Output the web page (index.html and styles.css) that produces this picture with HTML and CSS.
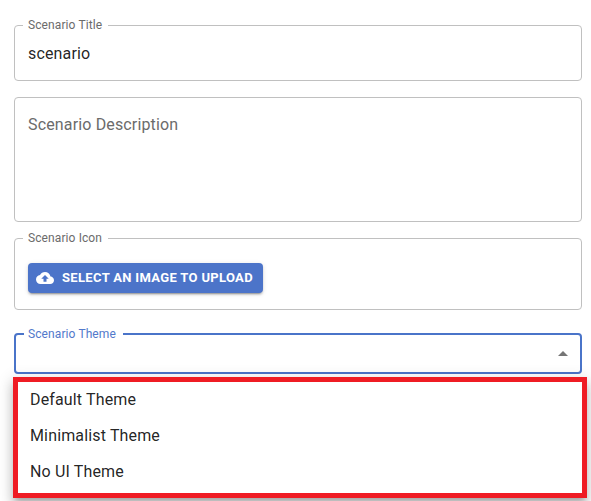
FILE: index.html
```html
<!DOCTYPE html>
<html lang="en">
<head>
<meta charset="utf-8">
<title>Scenario</title>
<link rel="stylesheet" href="styles.css">
</head>
<body>
<form class="form">
  <div class="field field-title">
    <label class="label">Scenario Title</label>
    <div class="value">scenario</div>
  </div>
  <div class="field field-description">
    <div class="placeholder">Scenario Description</div>
  </div>
  <div class="field field-icon">
    <label class="label">Scenario Icon</label>
    <button class="upload" type="button">
      <svg class="cloud" viewBox="0 0 24 24"><path fill="currentColor" d="M19.35 10.04C18.67 6.59 15.64 4 12 4 9.11 4 6.6 5.64 5.35 8.04 2.34 8.36 0 10.91 0 14c0 3.31 2.69 6 6 6h13c2.76 0 5-2.24 5-5 0-2.64-2.05-4.78-4.65-4.96zM14 13v4h-4v-4H7l5-5 5 5h-3z"/></svg>
      <span>Select an image to upload</span>
    </button>
  </div>
  <div class="field field-theme">
    <label class="label">Scenario Theme</label>
    <svg class="arrow" viewBox="0 0 24 24"><path fill="currentColor" d="M7 14l5-5 5 5z"/></svg>
  </div>
  <ul class="menu">
    <li class="option">Default Theme</li>
    <li class="option">Minimalist Theme</li>
    <li class="option">No UI Theme</li>
  </ul>
</form>
</body>
</html>
```
FILE: styles.css
```css
* {
  box-sizing: border-box;
}

body {
  margin: 0;
  height: 501px;
  overflow: hidden;
  background: #fff;
  color: rgba(0, 0, 0, 0.87);
  font: 400 16px/24px Roboto, sans-serif;
  letter-spacing: 0.15px;
}

.form {
  display: flex;
  flex-direction: column;
  padding: 25px 9px 0 14px;
}

.field {
  position: relative;
  width: 568px;
  border: 1px solid #c0c0c0;
  border-radius: 4px;
}

.field-title {
  height: 56px;
  padding: 16px 13px;
}

.field-description {
  height: 125px;
  margin-top: 16px;
  padding: 15px 13px;
}

.placeholder {
  color: #6b6b6b;
}

.field-icon {
  height: 72px;
  margin-top: 16px;
  padding: 24px 13px;
}

.field-theme {
  display: flex;
  align-items: center;
  justify-content: flex-end;
  height: 41px;
  margin-top: 23px;
  padding-right: 5px;
  border: 2px solid #4a74c9;
}

.label {
  position: absolute;
  top: -9px;
  left: 8px;
  padding: 0 6px 0 5px;
  background: #fff;
  color: #6b6b6b;
  font-size: 12px;
  line-height: 16px;
  letter-spacing: 0.1px;
}

.field-theme .label {
  top: -9px;
  left: 8px;
  padding: 0 7px 0 4px;
  color: #5279cb;
}

.upload {
  display: flex;
  align-items: center;
  gap: 8px;
  width: 235px;
  height: 30px;
  padding: 0 8px;
  border: 0;
  border-radius: 4px;
  background: #4c74c9;
  box-shadow: 0 3px 1px -2px rgba(0, 0, 0, 0.2), 0 2px 2px rgba(0, 0, 0, 0.14), 0 1px 5px rgba(0, 0, 0, 0.12);
  color: #fff;
  font: 700 13px/22px Roboto, sans-serif;
  letter-spacing: 0.33px;
  text-transform: uppercase;
  white-space: nowrap;
}

.cloud {
  flex: none;
  width: 18px;
  height: 18px;
}

.arrow {
  width: 24px;
  height: 24px;
  color: #757575;
}

.menu {
  position: relative;
  width: 574px;
  height: 121px;
  margin: 3px 0 0 -1px;
  padding: 0 12px;
  border: 5px solid #ef1c24;
  background: #fff;
  box-shadow: 0 5px 5px -3px rgba(0, 0, 0, 0.2), 0 8px 10px 1px rgba(0, 0, 0, 0.14), 0 3px 14px 2px rgba(0, 0, 0, 0.12);
  list-style: none;
}

.option {
  height: 36px;
  padding: 6px 0;
}
```
